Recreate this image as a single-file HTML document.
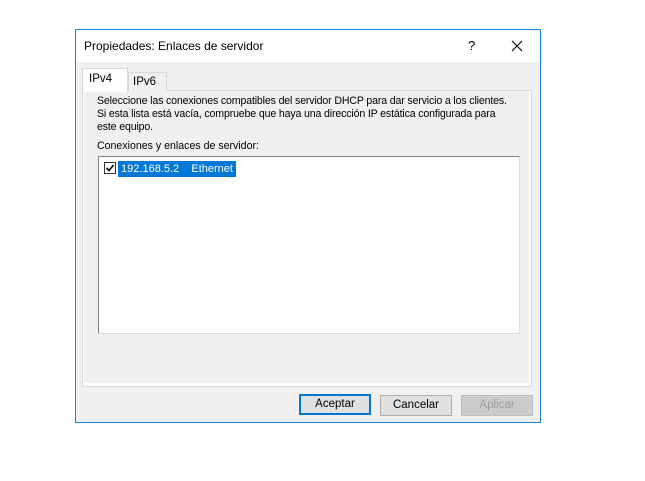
<!DOCTYPE html>
<html><head><style>
body{margin:0;width:645px;height:481px;background:#fff;position:relative;font-family:"Liberation Sans",sans-serif;font-size:11px;color:#000;overflow:hidden}
.a{position:absolute;white-space:nowrap}
.win{left:75px;top:29px;width:464px;height:392px;border:1px solid #1883d7;background:#f0f0f0}
.title{left:0;top:0;width:464px;height:32px;background:#fff}
.btn{height:19px;border:1px solid #adadad;background:#e1e1e1;text-align:center;line-height:19px;font-size:11.5px}
</style></head><body>
<div class="a win">
 <div class="a title">
  <div class="a" style="left:8px;top:9px;font-size:12px">Propiedades: Enlaces de servidor</div>
  <div class="a" style="left:392px;top:8px;font-size:13px">?</div>
  <svg class="a" style="left:435px;top:10px" width="12" height="12"><path d="M1 1L11 11M11 1L1 11" stroke="#000" stroke-width="1.1"/></svg>
 </div>
 <div class="a" style="left:6px;top:60px;width:448px;height:295px;border:1px solid #d9d9d9;background:#fff"></div>
 <div class="a" style="left:8px;top:61px;width:445px;height:292px;background:#f0f0f0"></div>
 <div class="a" style="left:52px;top:42px;width:37px;height:18px;border:1px solid #d9d9d9;border-bottom:none;background:#f0f0f0"><div class="a" style="left:4px;top:3px;font-size:11.5px">IPv6</div></div>
 <div class="a" style="left:6px;top:38px;width:44px;height:23px;border:1px solid #d9d9d9;border-bottom:none;background:#fff"><div class="a" style="left:6px;top:4px;font-size:11.5px">IPv4</div></div>
 <div class="a" style="left:21px;top:65px;line-height:13px;font-size:10.6px;letter-spacing:-0.15px">Seleccione las conexiones compatibles del servidor DHCP para dar servicio a los clientes.<br>Si esta lista está vacía, compruebe que haya una dirección IP estática configurada para<br>este equipo.</div>
 <div class="a" style="left:21px;top:110px;font-size:10.6px">Conexiones y enlaces de servidor:</div>
 <div class="a" style="left:22px;top:126px;width:420px;height:176px;border:1px solid #828282;border-right-color:#dcdcdc;border-bottom-color:#dcdcdc;background:#fff">
  <div class="a" style="left:5px;top:5px;width:10px;height:10px;border:1px solid #333;background:#fff"><svg width="10" height="10" style="position:absolute;left:0;top:0"><path d="M1.5 5L4 7.5L8.5 2" stroke="#000" stroke-width="1.6" fill="none"/></svg></div>
  <div class="a" style="left:19px;top:4px;width:118px;height:16px;background:#0078d7;color:#fff;line-height:16px;font-size:11px;overflow:hidden">&nbsp;192.168.5.2&nbsp;&nbsp;&nbsp;&nbsp;Ethernet</div>
 </div>
 <div class="a btn" style="left:223px;top:364px;width:68px;border:2px solid #0078d7;height:17px;line-height:17px">Aceptar</div>
 <div class="a btn" style="left:304px;top:365px;width:70px">Cancelar</div>
 <div class="a btn" style="left:385px;top:365px;width:70px;color:#9c9c9c;background:#cccccc;border-color:#bfbfbf">Aplicar</div>
</div>
</body></html>
